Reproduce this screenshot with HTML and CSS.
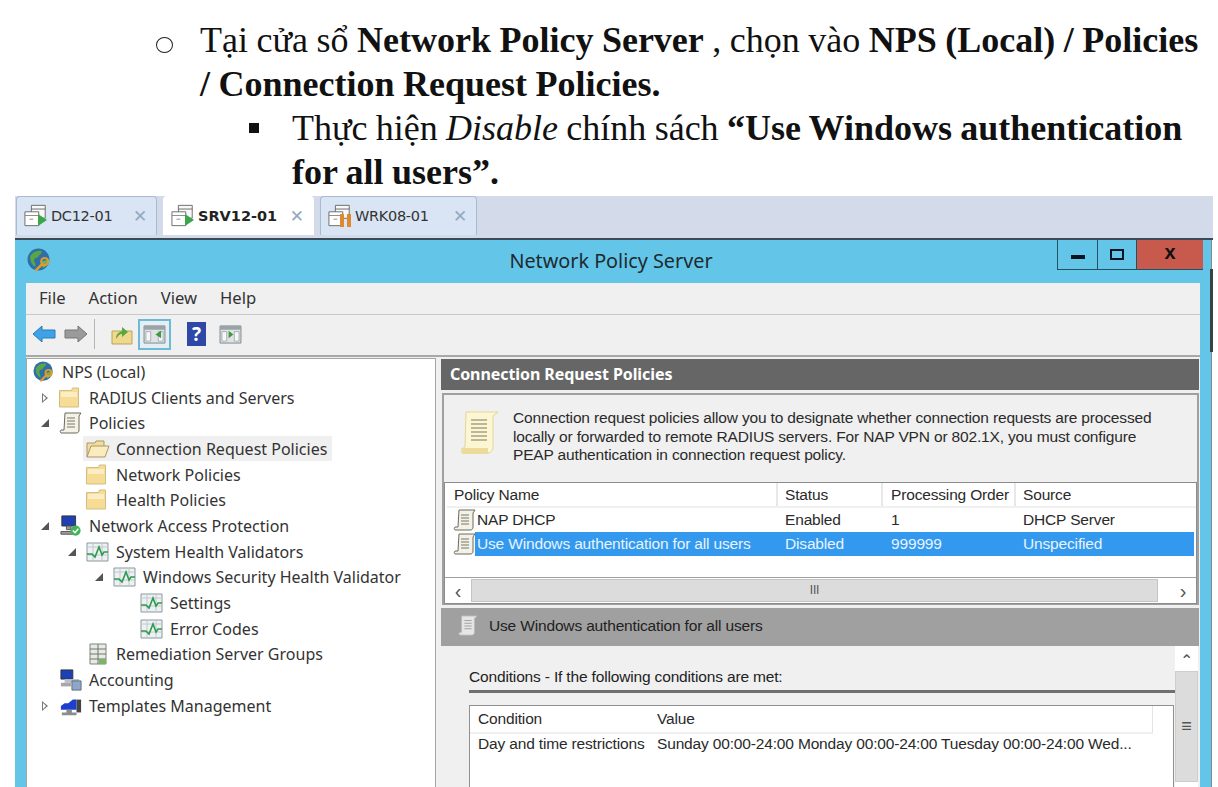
FILE: index.html
```html
<!DOCTYPE html>
<html lang="vi">
<head>
    <meta charset="UTF-8">
    <title>Network Policy Server</title>
    <link rel="stylesheet" href="styles.css">
</head>
<body>
    <svg class="defs" width="0" height="0">
        <symbol id="i-globe" viewBox="0 0 24 24">
            <circle cx="11" cy="11" r="10.5" fill="#2f6fa8"/>
            <path d="M3 8c3-5 8-6 11-5 1 2-2 3-3 5s-3 1-4 3 2 4 1 7c-3-1-5-5-5-10z" fill="#5aa545"/>
            <path d="M14 13c2-1 5-1 6-3 1 3-1 7-4 9-2-1-3-4-2-6z" fill="#6fb24e"/>
            <circle cx="17" cy="13" r="3.4" fill="none" stroke="#e39a2d" stroke-width="2"/>
            <path d="M14.5 15.5 8 22" stroke="#e39a2d" stroke-width="2.4"/>
        </symbol>
        <symbol id="i-folder" viewBox="0 0 24 22" preserveAspectRatio="xMinYMid">
            <path d="M.5 3.5h12l1-2.5h6v19H.5z" fill="#f6dc94" stroke="#d2bd82"/>
            <path d="M2 5h16v5H2z" fill="#fbeec4"/>
        </symbol>
        <symbol id="i-open" viewBox="0 0 24 20">
            <path d="M1 18V4h8l1-2h8v5" fill="#f3dc9c" stroke="#a99768"/>
            <path d="M1 18 5 7h18l-4 11z" fill="#fbecc0" stroke="#a99768"/>
        </symbol>
        <symbol id="i-scroll" viewBox="0 0 24 22" preserveAspectRatio="xMinYMid">
            <path d="M6 1h16l-2 3v14c0 2-1 3-3 3H2c-1-1-1-2 0-3h3z" fill="#f4f2e6" stroke="#6a6a60"/>
            <path d="M8 6h8M8 9h8M8 12h8M8 15h8" stroke="#77776c"/>
        </symbol>
        <symbol id="i-sub" viewBox="0 0 22 24">
            <path d="M4 1h17l-3 3v15c0 2-1 3-3 3H2c-1-1-1-2 0-3h2z" fill="#e6e6e6" stroke="#bdbdbd"/>
            <path d="M7 6h8M7 9h8M7 12h8M7 15h8" stroke="#9b9b9b"/>
        </symbol>
        <symbol id="i-note" viewBox="0 0 40 44">
            <path d="M6 1h32l-5 4v31c0 3-2 6-5 6H2c-1-2 0-5 3-6z" fill="#fdf6d2" stroke="#e3d59c"/>
            <path d="M11 9h16M11 13h16M11 17h16M11 21h16M11 25h16M11 29h16" stroke="#a8a288" stroke-width="1.3"/>
            <path d="M1 37h27v6H3z" fill="#eddb9c"/>
        </symbol>
        <symbol id="i-health" viewBox="0 0 24 20" preserveAspectRatio="xMinYMid">
            <path d="M1 1h21v18H1z" fill="#eef1f3" stroke="#8d979c"/>
            <path d="M1 5h21M1 13h21M7 1v18M16 1v18" stroke="#c0c8cc"/>
            <path d="M1 12h5l3 3 4-10 3 8 2-3h4" fill="none" stroke="#2c9a4e" stroke-width="1.6"/>
        </symbol>
        <symbol id="i-nap" viewBox="0 0 24 24">
            <path d="M2 1h15v11H2z" fill="#1f3fb4" stroke="#333"/>
            <path d="M7 12h5v4H7zM1 18h16v3H1z" fill="#9a9a9a" stroke="#555"/>
            <circle cx="17" cy="17" r="5.5" fill="#42b356"/>
            <path d="m14 17 2.4 2.4 3.6-4.4" fill="none" stroke="#fff" stroke-width="1.6"/>
        </symbol>
        <symbol id="i-servers" viewBox="0 0 18 22">
            <path d="M1 1h16v20H1z" fill="#e8ebe4" stroke="#7d857d"/>
            <path d="M1 6h16M1 11h16M1 16h16M9 1v20" stroke="#6f776f"/>
            <path d="M10 16h7v5h-7z" fill="#7cb56a"/>
        </symbol>
        <symbol id="i-acct" viewBox="0 0 24 24">
            <path d="M1 1h13v10H1z" fill="#1f3fb4" stroke="#333"/>
            <path d="M5 11h16v4H5z" fill="#b9c0c8"/>
            <path d="M13 13h10v10H13z" fill="#8fa6c8" stroke="#5d6a7c"/>
            <path d="M1 15h11v4H1z" fill="#a8a8a8"/>
        </symbol>
        <symbol id="i-tmpl" viewBox="0 0 24 24">
            <path d="M1 16h17V5h-4L9 9H5l-4 3z" fill="#1d3fd0"/>
            <path d="M18 5h5v14h-5z" fill="#444"/>
            <path d="M7 16h6v3H7zM2 19h16v3H2z" fill="#8c8c8c"/>
        </symbol>
        <symbol id="i-vm" viewBox="0 0 26 24">
            <path d="M8 1h15v14H8z" fill="#f8f8f8" stroke="#666"/>
            <path d="M8 5h15" stroke="#666"/>
            <path d="M1 8h15v15H1z" fill="#fff" stroke="#666"/>
            <path d="M1 12h15M6 16h4" stroke="#888"/>
        </symbol>
        <symbol id="i-pane" viewBox="0 0 24 20">
            <path d="M1 1h22v18H1z" fill="#dfe3e6" stroke="#7c858a"/>
            <path d="M1 1h22v4H1z" fill="#9aa3a8"/>
            <path d="M3 7h5v10H3zM16 7h5v10h-5z" fill="#f6f7f8" stroke="#8b9499" stroke-width=".7"/>
        </symbol>
    </svg>

    <div class="doc">
        <div class="item level-a">
            <span class="mark ring"></span>
            <p class="tight">Tại cửa sổ <b>Network Policy Server</b> , chọn vào <b>NPS (Local) / Policies<br>/ Connection Request Policies.</b></p>
        </div>
        <div class="item level-b">
            <span class="mark square"></span>
            <p>Thực hiện <i>Disable</i> chính sách <b>“Use Windows authentication<br>for all users”.</b></p>
        </div>
    </div>

    <div class="vm">
        <div class="tabs">
            <div class="tab">
                <span class="vm-icon"><svg class="ic-vm"><use href="#i-vm"/></svg><span class="play"></span></span>
                <span class="tab-name">DC12-01</span><span class="tab-x">✕</span>
            </div>
            <div class="tab active">
                <span class="vm-icon"><svg class="ic-vm"><use href="#i-vm"/></svg><span class="play"></span></span>
                <span class="tab-name">SRV12-01</span><span class="tab-x">✕</span>
            </div>
            <div class="tab wide">
                <span class="vm-icon"><svg class="ic-vm"><use href="#i-vm"/></svg><span class="pause"></span></span>
                <span class="tab-name">WRK08-01</span><span class="tab-x">✕</span>
            </div>
        </div>

        <div class="window">
            <div class="titlebar">
                <svg class="ic-title"><use href="#i-globe"/></svg>
                <span class="title">Network Policy Server</span>
                <div class="controls">
                    <span class="ctl"><span class="ctl-min"></span></span>
                    <span class="ctl ctl-mid"><span class="ctl-max"></span></span>
                    <span class="ctl ctl-close">x</span>
                </div>
            </div>

            <div class="client">
                <div class="menu">
                    <span>File</span><span>Action</span><span>View</span><span>Help</span>
                </div>
                <div class="toolbar">
                    <svg class="tb-arrow" viewBox="0 0 24 18"><path d="M1 9 10 1v4h13v8H10v4z" fill="#3ea3e6" stroke="#2a78b8"/></svg>
                    <svg class="tb-arrow" viewBox="0 0 24 18"><path d="M23 9 14 1v4H1v8h13v4z" fill="#9a9a9a" stroke="#777"/></svg>
                    <span class="tb-sep"></span>
                    <svg class="tb-up" viewBox="0 0 22 22"><path d="M1 21V8h20v13z" fill="#f0d88c" stroke="#b9a262"/><path d="M5 16c0-5 3-7 6-8V4l6 5-6 5v-3c-3 0-4 2-6 5z" fill="#58a83e"/></svg>
                    <span class="tb-on"><svg class="tb-pane" viewBox="0 0 24 20"><use href="#i-pane"/><path d="m19 6-6 4 6 4z" fill="#3c9a3c"/></svg></span>
                    <span class="tb-help">?</span>
                    <svg class="tb-pane" viewBox="0 0 24 20"><use href="#i-pane"/><path d="m10 6 5 4-5 4z" fill="#3c9a3c"/></svg>
                </div>

                <div class="panes">
                    <div class="tree">
                        <div class="node"><svg class="ic"><use href="#i-globe"/></svg><span class="lbl">NPS (Local)</span></div>
                        <div class="node d1"><span class="tw closed"></span><svg class="ic"><use href="#i-folder"/></svg><span class="lbl">RADIUS Clients and Servers</span></div>
                        <div class="node d1"><span class="tw open"></span><svg class="ic"><use href="#i-scroll"/></svg><span class="lbl">Policies</span></div>
                        <div class="node d2"><span class="tw"></span><span class="picked"><svg class="ic"><use href="#i-open"/></svg><span class="lbl">Connection Request Policies</span></span></div>
                        <div class="node d2"><span class="tw"></span><svg class="ic"><use href="#i-folder"/></svg><span class="lbl">Network Policies</span></div>
                        <div class="node d2"><span class="tw"></span><svg class="ic"><use href="#i-folder"/></svg><span class="lbl">Health Policies</span></div>
                        <div class="node d1"><span class="tw open"></span><svg class="ic"><use href="#i-nap"/></svg><span class="lbl">Network Access Protection</span></div>
                        <div class="node d2"><span class="tw open"></span><svg class="ic"><use href="#i-health"/></svg><span class="lbl">System Health Validators</span></div>
                        <div class="node d3"><span class="tw open"></span><svg class="ic"><use href="#i-health"/></svg><span class="lbl">Windows Security Health Validator</span></div>
                        <div class="node d4"><span class="tw"></span><svg class="ic"><use href="#i-health"/></svg><span class="lbl">Settings</span></div>
                        <div class="node d4"><span class="tw"></span><svg class="ic"><use href="#i-health"/></svg><span class="lbl">Error Codes</span></div>
                        <div class="node d2"><span class="tw"></span><svg class="ic"><use href="#i-servers"/></svg><span class="lbl">Remediation Server Groups</span></div>
                        <div class="node d1"><span class="tw"></span><svg class="ic"><use href="#i-acct"/></svg><span class="lbl">Accounting</span></div>
                        <div class="node d1"><span class="tw closed"></span><svg class="ic"><use href="#i-tmpl"/></svg><span class="lbl">Templates Management</span></div>
                    </div>

                    <div class="detail">
                        <div class="detail-head">Connection Request Policies</div>
                        <div class="upper">
                            <div class="intro">
                                <svg class="ic-note"><use href="#i-note"/></svg>
                                <p>Connection request policies allow you to designate whether connection requests are processed locally or forwarded to remote RADIUS servers. For NAP VPN or 802.1X, you must configure PEAP authentication in connection request policy.</p>
                            </div>
                            <div class="list">
                                <div class="row list-head">
                                    <span class="c-name">Policy Name</span><span class="c-status">Status</span><span class="c-order">Processing Order</span><span class="c-src">Source</span>
                                </div>
                                <div class="row">
                                    <svg class="ic-row"><use href="#i-scroll"/></svg>
                                    <span class="c-name">NAP DHCP</span><span class="c-status">Enabled</span><span class="c-order">1</span><span class="c-src">DHCP Server</span>
                                </div>
                                <div class="row selected">
                                    <svg class="ic-row"><use href="#i-scroll"/></svg>
                                    <span class="c-name">Use Windows authentication for all users</span><span class="c-status">Disabled</span><span class="c-order">999999</span><span class="c-src">Unspecified</span>
                                </div>
                                <div class="list-fill"></div>
                                <div class="hscroll">
                                    <span class="sb-btn">‹</span>
                                    <span class="sb-thumb">III</span>
                                    <span class="sb-btn">›</span>
                                </div>
                            </div>
                        </div>
                        <div class="sub-head">
                            <svg class="ic-sub"><use href="#i-sub"/></svg>
                            <span>Use Windows authentication for all users</span>
                        </div>
                        <div class="lower">
                            <div class="cond">
                                <div class="cond-title">Conditions - If the following conditions are met:</div>
                                <div class="cond-table">
                                    <div class="cond-head"><span class="c-cond">Condition</span><span>Value</span></div>
                                    <div class="cond-row"><span class="c-cond">Day and time restrictions</span><span>Sunday 00:00-24:00 Monday 00:00-24:00 Tuesday 00:00-24:00 Wed...</span></div>
                                </div>
                            </div>
                            <div class="vscroll">
                                <span class="vs-btn">⌃</span>
                                <span class="vs-thumb">≡</span>
                                <span class="vs-end"></span>
                            </div>
                        </div>
                    </div>
                </div>
            </div>
        </div>
    </div>
</body>
</html>
```

FILE: styles.css
```css
html, body {
    margin: 0;
    height: 787px;
    overflow: hidden;
    background: #fff;
}
.defs {
    position: absolute;
}

/* word document part */
.doc {
    height: 196px;
    padding-top: 18px;
    box-sizing: border-box;
    font-family: "Liberation Serif", serif;
    font-size: 36px;
    line-height: 44px;
    color: #111;
    word-spacing: -.7px;
    white-space: nowrap;
}
.doc p {
    margin: 0;
}
.item {
    display: flex;
}
.level-a {
    padding-left: 156px;
}
.level-b {
    padding-left: 249px;
}
.ring {
    flex: none;
    width: 17px;
    height: 16px;
    box-sizing: border-box;
    border: 1.5px solid #222;
    border-radius: 50%;
    margin: 19px 27px 0 0;
}
.square {
    flex: none;
    width: 10px;
    height: 10px;
    background: #111;
    margin: 17px 33px 0 0;
}
.tight {
    word-spacing: -.5px;
}

/* vm host */
.vm {
    margin-left: 15px;
    width: 1198px;
    font-family: "Noto Sans", sans-serif;
    color: #333;
}
.tabs {
    display: flex;
    gap: 6px;
    height: 44px;
    padding-left: 1px;
    box-sizing: border-box;
    background: #d3dbeb;
    border-bottom: 2px solid #3b4a55;
}
.tab {
    width: 141px;
    height: 39px;
    box-sizing: border-box;
    display: flex;
    align-items: center;
    padding-left: 7px;
    background: #d9e5f5;
    border: 1px solid #a9bad0;
    border-bottom: 0;
    border-radius: 4px 4px 0 0;
    font-family: "DejaVu Sans", sans-serif;
    font-size: 14.5px;
    letter-spacing: -.3px;
}
.tab.active {
    width: 151px;
    background: #fff;
    border-color: #fff;
    font-weight: bold;
    letter-spacing: 0;
    color: #222;
}
.tab.wide {
    width: 157px;
}
.vm-icon {
    position: relative;
    width: 24px;
    height: 24px;
    margin-right: 3px;
}
.ic-vm {
    width: 24px;
    height: 23px;
}
.play {
    position: absolute;
    left: 14px;
    top: 10px;
    border-left: 9px solid #3aa648;
    border-top: 6px solid transparent;
    border-bottom: 6px solid transparent;
}
.pause {
    position: absolute;
    left: 12px;
    top: 10px;
    width: 4px;
    height: 13px;
    background: #e0882c;
    box-shadow: 7px 0 0 #e0882c;
}
.tab-name {
    flex: 1;
}
.tab-x {
    color: #94a9bd;
    font-size: 17px;
    margin-right: 9px;
    font-weight: bold;
}

/* window */
.window {
    height: 547px;
    width: 1197px;
    box-sizing: border-box;
    background: #63c6e8;
    padding: 0 11px 0 11px;
    border-right: 1px solid #808a8e;
    display: flex;
    flex-direction: column;
    position: relative;
}
.window::after {
    content: "";
    position: absolute;
    right: -2px;
    top: 29px;
    width: 3px;
    height: 83px;
    background: #3a4044;
}
.titlebar {
    height: 43px;
    flex: none;
    display: flex;
    align-items: flex-start;
    position: relative;
}
.ic-title {
    width: 25px;
    height: 25px;
    margin-top: 8px;
    margin-left: 1px;
}
.title {
    position: absolute;
    left: 0;
    right: 4px;
    top: 8px;
    text-align: center;
    font-size: 19.8px;
    line-height: 26px;
    color: #1e2a30;
}
.controls {
    position: absolute;
    right: -3px;
    top: 0;
    display: flex;
    height: 30px;
    border: 1px solid #24505f;
    border-top: 0;
    border-right: 0;
    box-sizing: border-box;
}
.ctl {
    width: 39px;
    display: flex;
    align-items: center;
    justify-content: center;
}
.ctl-mid {
    border-left: 1px solid #24505f;
    border-right: 1px solid #24505f;
    width: 38px;
}
.ctl-min {
    width: 14px;
    height: 4px;
    margin-top: 4px;
    background: #0a1420;
}
.ctl-max {
    width: 10px;
    height: 7px;
    border: 2px solid #0a1420;
}
.ctl-close {
    width: 66px;
    background: #c75a4d;
    font-family: "Liberation Sans", sans-serif;
    font-size: 20px;
    font-weight: bold;
    color: #111;
    padding-bottom: 4px;
    box-sizing: border-box;
}
.client {
    flex: 1;
    background: #f0f0f0;
    display: flex;
    flex-direction: column;
    min-height: 0;
}
.menu {
    display: flex;
    gap: 23px;
    height: 32px;
    flex: none;
    align-items: center;
    padding: 0 0 2px 13px;
    font-size: 16.6px;
    border-bottom: 1px solid #c8c8c8;
    box-sizing: border-box;
}
.toolbar {
    height: 42px;
    flex: none;
    display: flex;
    align-items: center;
    padding: 0 0 2px 6px;
    border-bottom: 2px solid #a8a8a8;
    box-sizing: border-box;
}
.tb-arrow {
    width: 24px;
    height: 18px;
    margin-right: 8px;
}
.tb-sep {
    width: 1px;
    height: 30px;
    background: #b5b5b5;
    margin: 0 16px 0 -2px;
}
.tb-up {
    width: 22px;
    height: 22px;
    margin-right: 5px;
}
.tb-on {
    width: 33px;
    height: 31px;
    box-sizing: border-box;
    border: 2px solid #6cb9d8;
    background: #e4eef3;
    display: flex;
    align-items: center;
    justify-content: center;
    margin-right: 16px;
}
.tb-pane {
    width: 23px;
    height: 19px;
}
.tb-help {
    width: 19px;
    height: 24px;
    background: #2f48a8;
    color: #fff;
    font-size: 19px;
    line-height: 24px;
    font-weight: bold;
    text-align: center;
    margin-right: 13px;
}
.panes {
    flex: 1;
    display: flex;
    gap: 5px;
    min-height: 0;
    padding: 1px 1px 0 0;
}

/* tree */
.tree {
    width: 410px;
    flex: none;
    box-sizing: border-box;
    background: #fff;
    border: 1px solid #a5a5a5;
    border-bottom: 0;
    padding: 0 0 0 5px;
    font-size: 16px;
}
.node {
    display: flex;
    align-items: center;
    height: 25.7px;
}
.ic {
    width: 24px;
    height: 22px;
    margin-right: 6px;
    flex: none;
}
.lbl {
    white-space: nowrap;
}
.d1 { padding-left: 8px; }
.d2 { padding-left: 35px; }
.d3 { padding-left: 62px; }
.d4 { padding-left: 89px; }
.tw {
    width: 19px;
    flex: none;
    height: 12px;
    position: relative;
}
.tw.closed::before {
    content: "";
    position: absolute;
    left: 2px;
    top: 1px;
    border-left: 6px solid #777;
    border-top: 5px solid transparent;
    border-bottom: 5px solid transparent;
}
.tw.closed::after {
    content: "";
    position: absolute;
    left: 3px;
    top: 3px;
    border-left: 3px solid #fff;
    border-top: 3px solid transparent;
    border-bottom: 3px solid transparent;
}
.tw.open::before {
    content: "";
    position: absolute;
    left: 1px;
    top: 2px;
    border-right: 8px solid #555;
    border-top: 8px solid transparent;
}
.picked {
    display: flex;
    align-items: center;
    height: 25px;
    background: #f0f0f0;
    padding-right: 5px;
    margin-left: -3px;
    padding-left: 3px;
}

/* right side */
.detail {
    flex: 1;
    min-width: 0;
    display: flex;
    flex-direction: column;
    font-family: "Liberation Sans", sans-serif;
    font-size: 15.5px;
    letter-spacing: -.16px;
    color: #2a2a2a;
}
.detail-head {
    height: 31px;
    flex: none;
    background: #666;
    color: #fff;
    font-family: "Noto Sans", sans-serif;
    font-weight: bold;
    font-size: 16px;
    letter-spacing: -.08px;
    line-height: 30px;
    padding-left: 9px;
    margin: 1px 0 3px;
}
.upper {
    height: 212px;
    flex: none;
    box-sizing: border-box;
    border: 2px solid #a0a0a0;
    border-bottom-width: 1px;
    margin: 0 0 0 1px;
    display: flex;
    flex-direction: column;
}
.intro {
    height: 87px;
    flex: none;
    display: flex;
    padding: 14px 0 0 16px;
    box-sizing: border-box;
}
.ic-note {
    width: 40px;
    height: 44px;
    margin: 2px 13px 0 0;
    flex: none;
}
.intro p {
    margin: 0;
    width: 660px;
    line-height: 18.5px;
}
.list {
    flex: 1;
    display: flex;
    flex-direction: column;
    background: #fff;
    border: 1px solid #8c8c8c;
    padding-left: 2px;
}
.row {
    display: flex;
    height: 24.2px;
    align-items: center;
    flex: none;
    position: relative;
    padding-left: 30px;
}
.row span {
    white-space: nowrap;
    box-sizing: border-box;
}
.list-head {
    height: 25px;
    padding-left: 0;
    border-bottom: 2px solid #f0f0f0;
    box-sizing: border-box;
}
.list-head .c-name { width: 331px; padding-left: 7px; }
.list-head span { border-right: 2px solid #e8e8e8; line-height: 23px; }
.list-head .c-src { border-right: 0; }
.c-name { width: 301px; }
.c-status { width: 105px; padding-left: 7px; }
.c-order { width: 133px; padding-left: 8px; }
.c-src { padding-left: 7px; }
.ic-row {
    position: absolute;
    left: 6px;
    top: 0;
    width: 24px;
    height: 24px;
}
.selected {
    color: #e8f3ff;
    background: linear-gradient(#3399ee, #3399ee) no-repeat 28px 0;
    margin-right: 2px;
}
.list-fill {
    flex: 1;
}
.hscroll {
    height: 25px;
    flex: none;
    display: flex;
    align-items: center;
    border-top: 1px solid #a0a0a0;
    color: #555;
    margin-left: -2px;
}
.sb-btn {
    width: 26px;
    text-align: center;
    font-size: 20px;
    line-height: 20px;
}
.sb-thumb {
    flex: 1;
    height: 23px;
    margin-right: 12px;
    background: #dcdcdc;
    border: 1px solid #c4c4c4;
    box-sizing: border-box;
    text-align: center;
    line-height: 21px;
    font-size: 12px;
}
.sub-head {
    height: 38px;
    flex: none;
    margin-top: 3px;
    display: flex;
    align-items: center;
    background: #a0a0a0;
    padding: 0 0 3px 17px;
    box-sizing: border-box;
    color: #222;
}
.ic-sub {
    width: 20px;
    height: 24px;
    margin-right: 11px;
}
.lower {
    flex: 1;
    display: flex;
    min-height: 0;
}
.cond {
    flex: 1;
    min-width: 0;
    padding: 20px 0 0 28px;
}
.cond-title {
    height: 27px;
    line-height: 22px;
    border-bottom: 3px solid #707070;
    box-sizing: border-box;
    margin-bottom: 12px;
    color: #222;
}
.cond-table {
    height: 100px;
    background: #fff;
    border: 1px solid #909090;
    margin-right: 1px;
}
.cond-head {
    display: flex;
    height: 26px;
    align-items: center;
    border-bottom: 2px solid #f0f0f0;
    padding-left: 8px;
    margin-right: 20px;
    border-right: 1px solid #e4e4e4;
}
.cond-row {
    display: flex;
    height: 20px;
    align-items: center;
    padding-left: 8px;
    white-space: nowrap;
}
.c-cond {
    width: 179px;
    flex: none;
}
.vscroll {
    width: 23px;
    flex: none;
    margin-right: 1px;
    display: flex;
    flex-direction: column;
    color: #555;
}
.vs-btn {
    height: 25px;
    background: #fff;
    text-align: center;
    font-size: 16px;
    line-height: 30px;
}
.vs-thumb {
    height: 111px;
    background: #dcdcdc;
    border: 1px solid #cdcdcd;
    box-sizing: border-box;
    text-align: center;
    line-height: 108px;
    font-size: 18px;
}
.vs-end {
    flex: 1;
    background: #fff;
}
```
